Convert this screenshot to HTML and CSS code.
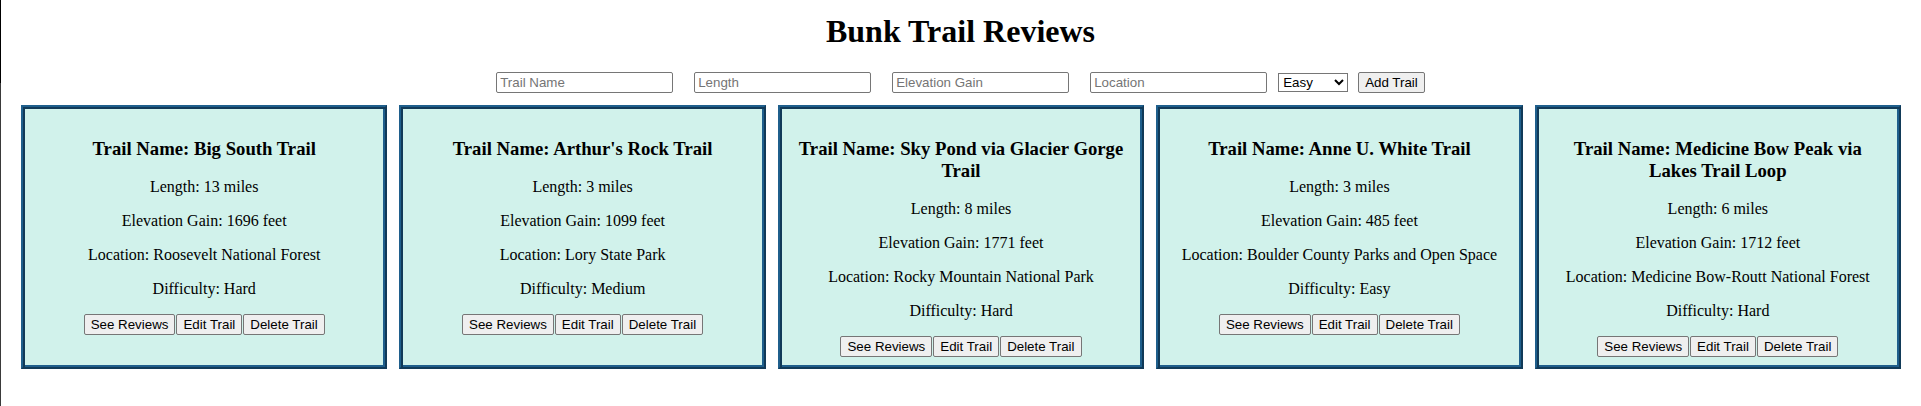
FILE: index.html
```html
<!DOCTYPE html>
<html lang="en">
<head>
<meta charset="utf-8">
<title>Bunk Trail Reviews</title>
<link rel="stylesheet" href="styles.css">
</head>
<body>
  <h1 class="title">Bunk Trail Reviews</h1>
  <form class="trail-form">
    <input class="field" type="text" placeholder="Trail Name">
    <input class="field" type="text" placeholder="Length">
    <input class="field" type="text" placeholder="Elevation Gain">
    <input class="field field-last" type="text" placeholder="Location">
    <select class="difficulty">
      <option>Easy</option>
      <option>Medium</option>
      <option>Hard</option>
    </select>
    <button class="btn" type="button">Add Trail</button>
  </form>
  <div class="cards">
    <div class="card">
      <h3 class="card-title">Trail Name: Big South Trail</h3>
      <p class="card-line">Length: 13 miles</p>
      <p class="card-line">Elevation Gain: 1696 feet</p>
      <p class="card-line">Location: Roosevelt National Forest</p>
      <p class="card-line">Difficulty: Hard</p>
      <div class="card-actions">
        <button class="btn" type="button">See Reviews</button>
        <button class="btn" type="button">Edit Trail</button>
        <button class="btn" type="button">Delete Trail</button>
      </div>
    </div>
    <div class="card">
      <h3 class="card-title">Trail Name: Arthur's Rock Trail</h3>
      <p class="card-line">Length: 3 miles</p>
      <p class="card-line">Elevation Gain: 1099 feet</p>
      <p class="card-line">Location: Lory State Park</p>
      <p class="card-line">Difficulty: Medium</p>
      <div class="card-actions">
        <button class="btn" type="button">See Reviews</button>
        <button class="btn" type="button">Edit Trail</button>
        <button class="btn" type="button">Delete Trail</button>
      </div>
    </div>
    <div class="card">
      <h3 class="card-title">Trail Name: Sky Pond via Glacier Gorge Trail</h3>
      <p class="card-line">Length: 8 miles</p>
      <p class="card-line">Elevation Gain: 1771 feet</p>
      <p class="card-line">Location: Rocky Mountain National Park</p>
      <p class="card-line">Difficulty: Hard</p>
      <div class="card-actions">
        <button class="btn" type="button">See Reviews</button>
        <button class="btn" type="button">Edit Trail</button>
        <button class="btn" type="button">Delete Trail</button>
      </div>
    </div>
    <div class="card">
      <h3 class="card-title">Trail Name: Anne U. White Trail</h3>
      <p class="card-line">Length: 3 miles</p>
      <p class="card-line">Elevation Gain: 485 feet</p>
      <p class="card-line">Location: Boulder County Parks and Open Space</p>
      <p class="card-line">Difficulty: Easy</p>
      <div class="card-actions">
        <button class="btn" type="button">See Reviews</button>
        <button class="btn" type="button">Edit Trail</button>
        <button class="btn" type="button">Delete Trail</button>
      </div>
    </div>
    <div class="card">
      <h3 class="card-title">Trail Name: Medicine Bow Peak via Lakes Trail Loop</h3>
      <p class="card-line">Length: 6 miles</p>
      <p class="card-line">Elevation Gain: 1712 feet</p>
      <p class="card-line">Location: Medicine Bow-Routt National Forest</p>
      <p class="card-line">Difficulty: Hard</p>
      <div class="card-actions">
        <button class="btn" type="button">See Reviews</button>
        <button class="btn" type="button">Edit Trail</button>
        <button class="btn" type="button">Delete Trail</button>
      </div>
    </div>
  </div>
</body>
</html>
```

FILE: styles.css
```css
html {
  min-height: 100%;
  background:
    linear-gradient(#000, #000) 0 0 / 1px 83px no-repeat,
    linear-gradient(#3a3a3a, #3a3a3a) 0 0 / 1px 100% no-repeat,
    #ffffff;
}

body {
  margin: 0;
  font-family: "Liberation Serif", "Times New Roman", serif;
  font-size: 16px;
  color: #000;
}

.title {
  margin: 13px 0 22px;
  font-size: 32px;
  font-weight: bold;
  line-height: normal;
  text-align: center;
}

.trail-form {
  display: flex;
  justify-content: center;
  align-items: center;
  gap: 11px;
  margin: 0;
  height: 21px;
}

.field {
  box-sizing: border-box;
  width: 177px;
  height: 21px;
  margin: 0 10px 0 0;
  padding: 1px 3px;
  border: 1px solid #767676;
  border-radius: 2px;
  background: #fff;
  font-family: "Liberation Sans", Arial, sans-serif;
  font-size: 13.333px;
  color: #000;
}

.field-last {
  margin-right: 0;
}

.field::placeholder {
  color: #757575;
}

.difficulty {
  box-sizing: border-box;
  width: 70px;
  height: 19px;
  margin: 0 -1px 0 0;
  font-family: "Liberation Sans", Arial, sans-serif;
  font-size: 13.333px;
  color: #000;
  background: #fff;
  border: 1px solid #767676;
  border-radius: 0;
}

.btn {
  box-sizing: border-box;
  height: 21px;
  margin: 0;
  padding: 1px 6px;
  border: 1px solid #767676;
  border-radius: 2px;
  background: #efefef;
  font-family: "Liberation Sans", Arial, sans-serif;
  font-size: 13.333px;
  line-height: normal;
  color: #000;
}

.cards {
  display: flex;
  align-items: stretch;
  gap: 12px;
  margin-top: 12px;
  padding: 0 20px 0 21px;
}

.card {
  flex: 1 1 0;
  min-width: 0;
  padding: 12px 13px 10px;
  background: #d1f2eb;
  border: 2px solid;
  border-color: #1f5f8c #113a58 #113a58 #1f5f8c;
  box-shadow: inset 2px 2px 0 #113a58, inset -2px -2px 0 #1f5f8c;
  text-align: center;
}

.card-title {
  margin: 18.72px 0;
  font-size: 18.72px;
  font-weight: bold;
  line-height: normal;
}

.card-line {
  margin: 16px 0;
  line-height: normal;
}

.card-actions {
  display: flex;
  justify-content: center;
  gap: 1px;
}
```
